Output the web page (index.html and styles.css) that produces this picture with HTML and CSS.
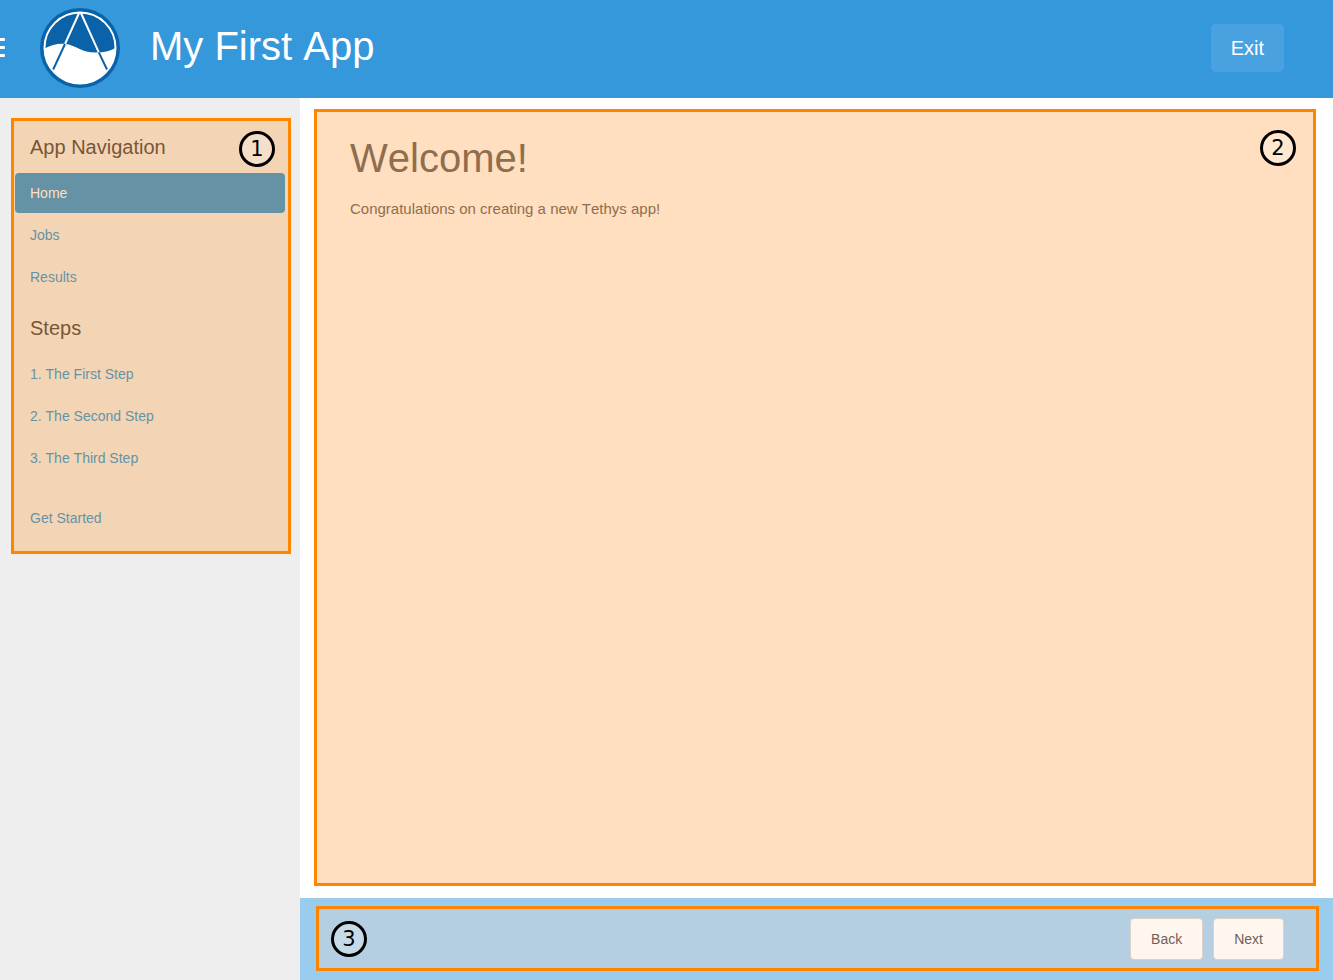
FILE: index.html
```html
<!DOCTYPE html>
<html lang="en">
<head>
<meta charset="utf-8">
<meta name="viewport" content="width=device-width, initial-scale=1">
<title>My First App</title>
<link rel="stylesheet" href="styles.css">
</head>
<body class="app">
<header class="header">
  <button class="menu-toggle" type="button" aria-label="Toggle navigation">
    <span class="menu-bar"></span><span class="menu-bar"></span><span class="menu-bar"></span>
  </button>
  <svg class="logo" viewBox="0 0 80 80" role="img" aria-label="App logo">
    <circle cx="40" cy="40" r="40" fill="#0a62a9"/>
    <circle cx="40" cy="40" r="35.5" fill="#0a62a9" stroke="#fff" stroke-width="2"/>
    <path d="M4.5 40.500C12 36.500 19 35 26 36C36 37.500 41 44.500 56 44.500C64 44.500 70 43 75.500 40A35.500 35.500 0 0 1 4.500 40.500Z" fill="#fff"/>
    <path d="M39.500 4L25 36M40.500 4L58.800 44.400" stroke="#fff" stroke-width="2"/>
    <path d="M25 36L13.200 61.500M58.800 44.400L67 61.500" stroke="#0a62a9" stroke-width="2"/>
  </svg>
  <h1 class="app-title">My First App</h1>
  <a class="exit" href="#exit">Exit</a>
</header>
<div class="body">
  <aside class="sidebar">
    <nav class="panel nav-panel" aria-label="App navigation">
      <h2 class="nav-title">App Navigation</h2>
      <ul class="nav-list">
        <li><a class="nav-link active" href="#home" aria-current="page">Home</a></li>
        <li><a class="nav-link" href="#jobs">Jobs</a></li>
        <li><a class="nav-link" href="#results">Results</a></li>
      </ul>
      <h2 class="nav-title">Steps</h2>
      <ul class="nav-list">
        <li><a class="nav-link" href="#step1">1. The First Step</a></li>
        <li><a class="nav-link" href="#step2">2. The Second Step</a></li>
        <li><a class="nav-link" href="#step3">3. The Third Step</a></li>
        <li class="separated"><a class="nav-link" href="#start">Get Started</a></li>
      </ul>
      <span class="badge nav-badge">1</span>
    </nav>
  </aside>
  <div class="content">
    <main class="panel main-panel">
      <h2 class="welcome">Welcome!</h2>
      <p class="message">Congratulations on creating a new Tethys app!</p>
      <span class="badge main-badge">2</span>
    </main>
    <footer class="actions">
      <div class="panel actions-panel">
        <span class="badge">3</span>
        <div class="buttons">
          <button class="button" type="button">Back</button>
          <button class="button" type="button">Next</button>
        </div>
      </div>
    </footer>
  </div>
</div>
</body>
</html>
```

FILE: styles.css
```css
* { box-sizing: border-box; }
.app {
  margin: 0;
  min-height: 100vh;
  display: flex;
  flex-direction: column;
  font-family: "Liberation Sans", Arial, sans-serif;
  font-size: 14px;
  font-kerning: none;
  background: #fff;
}
.header {
  display: flex;
  align-items: center;
  height: 98px;
  padding: 0 49px 2px 0;
  background: #3598db;
  color: #fff;
}
.menu-toggle {
  display: flex;
  flex-direction: column;
  gap: 5px;
  width: 5px;
  margin: 0 35px 1px 0;
  padding: 0;
  border: 0;
  background: none;
}
.menu-bar {
  height: 3px;
  background: #fff;
  border-radius: 0 1px 1px 0;
}
.logo { width: 80px; height: 80px; flex: none; }
.app-title {
  margin: 0 auto 4px 30px;
  font-size: 40px;
  line-height: 48px;
  font-weight: 400;
}
.exit {
  padding: 12px 20px;
  border-radius: 5px;
  background: #49a2df;
  color: #fff;
  font-size: 20px;
  line-height: 24px;
  text-decoration: none;
}
.body { flex: 1; display: flex; }
.sidebar {
  flex: none;
  width: 300px;
  padding: 20px 9px 20px 11px;
  background: #eee;
}
.panel { position: relative; border: 3px solid #ff8400; }
.nav-panel { padding: 15px 3px 13px 1px; background: #f3d5b6; }
.nav-title {
  margin: 0 0 15px;
  padding-left: 15px;
  color: #795636;
  font-size: 20px;
  line-height: 22px;
  font-weight: 400;
}
.nav-list {
  display: flex;
  flex-direction: column;
  gap: 2px;
  margin: 0;
  padding: 0;
  list-style: none;
}
.nav-list + .nav-title { margin-top: 20px; }
.nav-link {
  display: block;
  padding: 10px 15px;
  border-radius: 4px;
  color: #6593a5;
  line-height: 20px;
  text-decoration: none;
}
.nav-link.active { background: #6593a5; color: #ffdfc0; }
.separated { margin-top: 18px; }
.content { flex: 1; display: flex; flex-direction: column; }
.main-panel {
  flex: 1;
  margin: 11px 17px 12px 14px;
  padding: 24px 33px;
  background: #ffdfc0;
  color: #8f6e4e;
}
.welcome {
  margin: 0 0 18px;
  font-size: 40px;
  line-height: 44px;
  font-weight: 400;
}
.message { margin: 0; font-size: 15px; line-height: 21px; }
.badge {
  display: flex;
  align-items: center;
  justify-content: center;
  width: 36px;
  height: 36px;
  border: 3px solid #000;
  border-radius: 50%;
  background: rgba(255, 255, 255, 0.25);
  color: #000;
  font-family: "DejaVu Sans", sans-serif;
  font-size: 21px;
  line-height: 24px;
}
.nav-badge { position: absolute; top: 10px; right: 13px; }
.main-badge { position: absolute; top: 18px; right: 17px; }
.actions { padding: 8px 14px 9px 16px; background: #9accee; }
.actions-panel {
  display: flex;
  align-items: center;
  justify-content: space-between;
  height: 65px;
  padding: 0 32px 0 12px;
  background: #b3cfe1;
}
.buttons { display: flex; gap: 10px; }
.button {
  padding: 10px 20px;
  border: 1px solid #dfd0c4;
  border-radius: 4px;
  background: #fff6f0;
  color: #705f58;
  font: 14px/20px "Liberation Sans", Arial, sans-serif;
}
```
